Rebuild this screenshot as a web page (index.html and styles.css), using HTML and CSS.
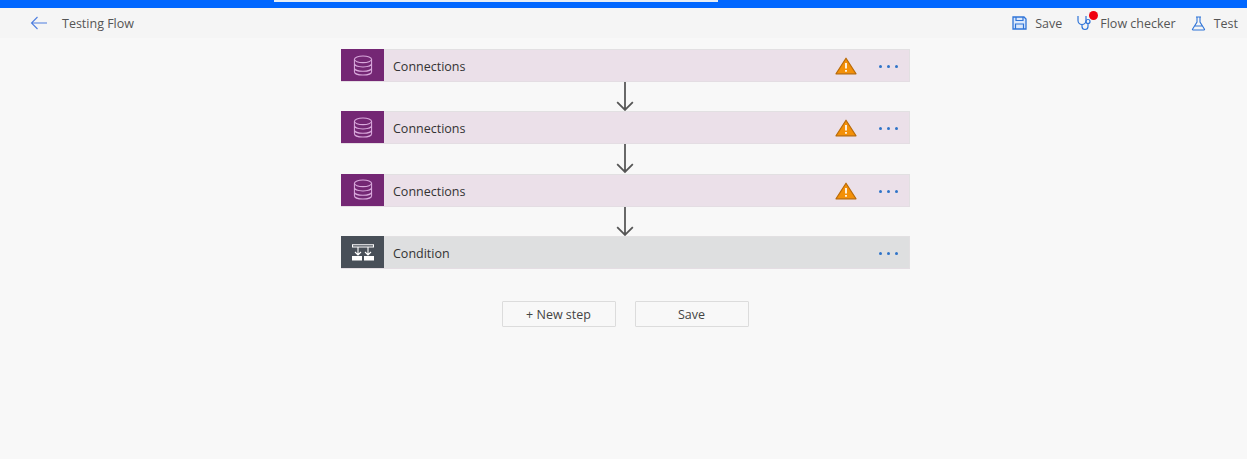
FILE: index.html
```html
<!DOCTYPE html>
<html lang="en">
<head>
<meta charset="utf-8">
<title>Testing Flow</title>
<link rel="stylesheet" href="styles.css">
</head>
<body>
<div class="topbar"><div class="search"></div></div>
<header class="header">
  <div class="title-group">
    <svg class="back" width="18" height="14" viewBox="0 0 18 14"><path d="M17 7H1.500M7.500 1 1.500 7l6 6" fill="none" stroke="#4f7fe0" stroke-width="1.100"/></svg>
    <span class="title">Testing Flow</span>
  </div>
  <nav class="actions">
    <div class="action action-save">
      <svg width="15" height="14" viewBox="0 0 15 14"><path d="M1 1h11l2 2v10H1z" fill="#dbe8fb" stroke="#2f74d8" stroke-width="1.300"/><path d="M4 1v3.500h7V1M3.500 13V8h8v5" fill="none" stroke="#2f74d8" stroke-width="1.200"/></svg>
      <span>Save</span>
    </div>
    <div class="action action-checker">
      <svg width="17" height="16" viewBox="0 0 17 16"><path d="M1 1v4.500a4 4 0 0 0 8 0V1M5 9.500v2a3 3 0 0 0 6 0V8.500" fill="none" stroke="#2f74d8" stroke-width="1.200"/><circle cx="11" cy="6.500" r="2" fill="none" stroke="#2f74d8" stroke-width="1.200"/></svg>
      <span class="badge"></span>
      <span>Flow checker</span>
    </div>
    <div class="action action-test">
      <svg width="15" height="15" viewBox="0 0 15 15"><path d="M5 1h5M6 1v5L1.500 13.200q-.3.800.5.800h11q.8 0 .5-.8L9 6V1M3.500 10h8" fill="none" stroke="#2f74d8" stroke-width="1.100"/></svg>
      <span>Test</span>
    </div>
  </nav>
</header>
<main class="flow">
  <section class="card card-action">
    <div class="tile tile-action">
      <svg width="20" height="21" viewBox="0 0 20 22"><g fill="none" stroke="#d9a9dc" stroke-width="1.100"><ellipse cx="10" cy="4.500" rx="9" ry="3.500"/><path d="M1 4.500v13c0 2 4 3.500 9 3.500s9-1.500 9-3.500v-13M1 9c0 2 4 3.500 9 3.500S19 11 19 9M1 13.500c0 2 4 3.500 9 3.500s9-1.500 9-3.500"/></g></svg>
    </div>
    <span class="card-label">Connections</span>
    <svg class="warn" width="22" height="18" viewBox="0 0 22 18"><path d="M11 1.200 21 16.800H1z" fill="#f39008" stroke="#b96a08" stroke-width="1.200" stroke-linejoin="round"/><path d="M11 6v5.500M11 13v1.800" stroke="#fff" stroke-width="1.700"/></svg>
    <div class="more"><i></i><i></i><i></i></div>
  </section>
  <svg class="arrow" width="20" height="30" viewBox="0 0 20 30"><path d="M10 0v28.500M2 20.500l8 8 8-8" fill="none" stroke="#555" stroke-width="1.800"/></svg>
  <section class="card card-action">
    <div class="tile tile-action">
      <svg width="20" height="21" viewBox="0 0 20 22"><g fill="none" stroke="#d9a9dc" stroke-width="1.100"><ellipse cx="10" cy="4.500" rx="9" ry="3.500"/><path d="M1 4.500v13c0 2 4 3.500 9 3.500s9-1.500 9-3.500v-13M1 9c0 2 4 3.500 9 3.500S19 11 19 9M1 13.500c0 2 4 3.500 9 3.500s9-1.500 9-3.500"/></g></svg>
    </div>
    <span class="card-label">Connections</span>
    <svg class="warn" width="22" height="18" viewBox="0 0 22 18"><path d="M11 1.200 21 16.800H1z" fill="#f39008" stroke="#b96a08" stroke-width="1.200" stroke-linejoin="round"/><path d="M11 6v5.500M11 13v1.800" stroke="#fff" stroke-width="1.700"/></svg>
    <div class="more"><i></i><i></i><i></i></div>
  </section>
  <svg class="arrow" width="20" height="30" viewBox="0 0 20 30"><path d="M10 0v28.500M2 20.500l8 8 8-8" fill="none" stroke="#555" stroke-width="1.800"/></svg>
  <section class="card card-action">
    <div class="tile tile-action">
      <svg width="20" height="21" viewBox="0 0 20 22"><g fill="none" stroke="#d9a9dc" stroke-width="1.100"><ellipse cx="10" cy="4.500" rx="9" ry="3.500"/><path d="M1 4.500v13c0 2 4 3.500 9 3.500s9-1.500 9-3.500v-13M1 9c0 2 4 3.500 9 3.500S19 11 19 9M1 13.500c0 2 4 3.500 9 3.500s9-1.500 9-3.500"/></g></svg>
    </div>
    <span class="card-label">Connections</span>
    <svg class="warn" width="22" height="18" viewBox="0 0 22 18"><path d="M11 1.200 21 16.800H1z" fill="#f39008" stroke="#b96a08" stroke-width="1.200" stroke-linejoin="round"/><path d="M11 6v5.500M11 13v1.800" stroke="#fff" stroke-width="1.700"/></svg>
    <div class="more"><i></i><i></i><i></i></div>
  </section>
  <svg class="arrow" width="20" height="30" viewBox="0 0 20 30"><path d="M10 0v28.500M2 20.500l8 8 8-8" fill="none" stroke="#555" stroke-width="1.800"/></svg>
  <section class="card card-condition">
    <div class="tile tile-condition">
      <svg width="22" height="17" viewBox="0 0 22 17"><path d="M.5.700h21v2.300H.5zM6 3v8M16 3v8M3 8l3 3 3-3M13 8l3 3 3-3" fill="none" stroke="#fff" stroke-width="1.100"/><path d="M0 12h10v4.500H0zM12 12h10v4.500H12z" fill="#fff"/></svg>
    </div>
    <span class="card-label">Condition</span>
    <div class="more"><i></i><i></i><i></i></div>
  </section>
  <div class="buttons">
    <button class="btn" type="button">+ New step</button>
    <button class="btn" type="button">Save</button>
  </div>
</main>
</body>
</html>
```

FILE: styles.css
```css
* { box-sizing: border-box; }
html, body { margin: 0; height: 100%; }
body {
  background: #f8f8f8;
  color: #3b3b3b;
  font-family: "Open Sans", "Noto Sans", sans-serif;
  font-size: 12.5px;
  overflow: hidden;
}
.topbar {
  height: 8px;
  background: #0067ff;
  padding-left: 274px;
}
.search {
  width: 444px;
  height: 2px;
  background: #e6edf5;
}
.header {
  height: 30px;
  background: #f5f5f5;
  display: flex;
  align-items: center;
  justify-content: space-between;
  padding: 0 9px 0 30px;
}
.title-group { display: flex; align-items: center; gap: 14px; }
.back { display: block; }
.title { color: #555; }
.actions { display: flex; align-items: center; }
.action { display: flex; align-items: center; position: relative; color: #555; }
.action-save { gap: 8px; margin-right: 15px; }
.action-checker { gap: 6px; margin-right: 15px; }
.action-test { gap: 8px; }
.badge {
  position: absolute;
  left: 12px;
  top: -4px;
  width: 9px;
  height: 9px;
  border-radius: 50%;
  background: #f00010;
}
.flow {
  width: 569px;
  margin: 11px 0 0 341px;
  display: flex;
  flex-direction: column;
  align-items: center;
}
.card {
  width: 100%;
  height: 33px;
  display: flex;
  align-items: center;
  border-bottom: 1px solid #e4dde3;
  border-top: 1px solid #e2e0e2;
  border-right: 1px solid #e2e0e2;
  color: #333;
}
.card-action { background: #ebe0e9; }
.card-condition { background: #dedfe0; }
.tile {
  width: 43px;
  height: 32px;
  flex: none;
  margin-top: -1px;
  display: flex;
  align-items: center;
  justify-content: center;
}
.tile-action { background: #742774; }
.tile-condition { background: #484f58; }
.card-label { margin-left: 9px; padding-top: 2px; flex: 1; }
.warn { margin-right: 22px; margin-top: 1px; display: block; }
.more {
  display: flex;
  gap: 5px;
  width: 30px;
  margin-top: 2px;
}
.more i {
  width: 3px;
  height: 3px;
  border-radius: 50%;
  background: #2f74c8;
}
.arrow { display: block; height: 29.4px; flex: none; margin-right: 1px; }
.buttons {
  display: flex;
  gap: 19px;
  margin-top: 32px;
  margin-right: 1px;
}
.btn {
  width: 114px;
  height: 26px;
  padding: 0;
  background: #f8f8f8;
  border: 1px solid #dcdcdc;
  border-radius: 1px;
  color: #444;
  font: inherit;
}
```
